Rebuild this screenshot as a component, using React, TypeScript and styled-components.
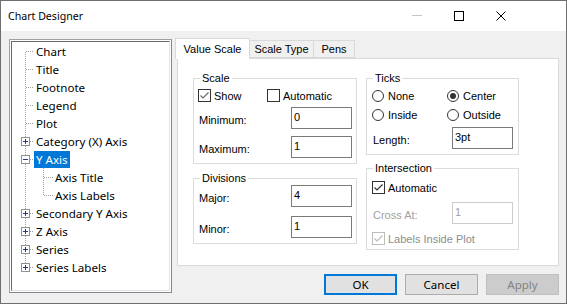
import React from "react";
import styled, { createGlobalStyle } from "styled-components";

const UI = `"Segoe UI", "Noto Sans", sans-serif`;
const SANS = `"Liberation Sans", Arial, sans-serif`;

const GlobalStyle = createGlobalStyle`
  html, body {
    margin: 0;
    padding: 0;
    background: #fff;
  }
  body {
    width: 567px;
    height: 304px;
    overflow: hidden;
  }
`;

const Window = styled.div`
  width: 567px;
  height: 304px;
  box-sizing: border-box;
  border: 1px solid #6f6f6f;
  display: flex;
  flex-direction: column;
  background: #f0f0f0;
  font-family: ${SANS};
  font-size: 11px;
  color: #000;
`;

const TitleBar = styled.div`
  height: 30px;
  flex: none;
  background: #fff;
  display: flex;
  align-items: center;
  padding-left: 7px;
`;

const Title = styled.span`
  font-family: ${UI};
  font-size: 10.6px;
  color: #000;
`;

const CaptionGroup = styled.div`
  margin-left: auto;
  margin-right: 44px;
  display: flex;
  height: 100%;
`;

const CaptionButton = styled.div`
  width: 42px;
  height: 100%;
  display: flex;
  align-items: center;
  justify-content: center;
`;

const Body = styled.div`
  flex: 1;
  display: flex;
  align-items: flex-start;
  padding: 7px 0 0 8px;
`;

const TreeFrame = styled.div`
  width: 163px;
  height: 254px;
  box-sizing: border-box;
  margin-top: 1px;
  border: 1px solid;
  border-color: #a0a0a0 #828790 #828790 #a0a0a0;
  padding: 1px;
  background: #fff;
`;

const TreeView = styled.div`
  height: 100%;
  box-sizing: border-box;
  border: 1px solid;
  border-color: #696969 #e3e3e3 #e3e3e3 #696969;
  background: #fff;
  display: flex;
  flex-direction: column;
  font-family: ${UI};
  font-size: 11.6px;
`;

const TreeRow = styled.div`
  height: 18px;
  display: flex;
  align-items: center;
  flex: none;
`;

const NodeLabel = styled.span<{ selected?: boolean }>`
  height: 17px;
  line-height: 17px;
  padding: 0 2px;
  white-space: nowrap;
  background: ${({ selected }) => (selected ? "#0078d7" : "transparent")};
  color: ${({ selected }) => (selected ? "#fff" : "#000")};
`;

const RightColumn = styled.div`
  margin-left: 3px;
  width: 384px;
  display: flex;
  flex-direction: column;
`;

const TabStrip = styled.div`
  height: 20px;
  display: flex;
  align-items: flex-end;
`;

const Tab = styled.div<{ active?: boolean; w: number }>`
  width: ${({ w }) => w}px;
  height: ${({ active }) => (active ? 21 : 18)}px;
  margin-bottom: ${({ active }) => (active ? -1 : 0)}px;
  margin-left: ${({ active }) => (active ? 0 : -1)}px;
  box-sizing: border-box;
  border: 1px solid #d9d9d9;
  border-bottom: ${({ active }) => (active ? "none" : "1px solid #d9d9d9")};
  background: ${({ active }) => (active ? "#fff" : "#f0f0f0")};
  position: relative;
  z-index: ${({ active }) => (active ? 2 : 0)};
  display: flex;
  align-items: center;
  justify-content: center;
  white-space: nowrap;
`;

const Page = styled.div`
  margin-left: 2px;
  width: 382px;
  height: 208px;
  box-sizing: border-box;
  border: 1px solid #d9d9d9;
  background: #fff;
  display: flex;
  gap: 9px;
  padding: 13px 0 0 15px;
  position: relative;
  z-index: 1;
`;

const Column = styled.div<{ w: number }>`
  width: ${({ w }) => w}px;
  display: flex;
  flex-direction: column;
`;

const Group = styled.fieldset<{ top?: number }>`
  margin: ${({ top }) => top ?? 0}px 0 0 0;
  padding: 0;
  min-width: 0;
  border: 1px solid #dcdcdc;
`;

const Legend = styled.legend`
  margin-left: 6px;
  padding: 0 2px;
  line-height: 13px;
  font-size: 11px;
`;

const GroupBody = styled.div<{ pad: string }>`
  padding: ${({ pad }) => pad};
  display: flex;
  flex-direction: column;
`;

const OptionRow = styled.div<{ h: number; top?: number }>`
  height: ${({ h }) => h}px;
  margin-top: ${({ top }) => top ?? 0}px;
  display: flex;
  align-items: center;
`;

const Option = styled.label<{ w?: number; disabled?: boolean }>`
  display: inline-flex;
  align-items: center;
  gap: 3px;
  width: ${({ w }) => (w ? `${w}px` : "auto")};
  color: ${({ disabled }) => (disabled ? "#8d8d8d" : "#000")};
  white-space: nowrap;
`;

const RadioOption = styled(Option)`
  gap: 4px;
`;

const FieldRow = styled.div<{ top?: number }>`
  height: 22px;
  margin-top: ${({ top }) => top ?? 0}px;
  display: flex;
  align-items: center;
  justify-content: space-between;
`;

const FieldLabel = styled.span<{ disabled?: boolean }>`
  padding: 3px 0 0 1px;
  color: ${({ disabled }) => (disabled ? "#a0a0a0" : "#000")};
`;

const TextBox = styled.div<{ disabled?: boolean }>`
  width: 61px;
  height: 22px;
  box-sizing: border-box;
  border: 1px solid ${({ disabled }) => (disabled ? "#cccccc" : "#7a7a7a")};
  background: #fff;
  padding: 2px 0 0 2px;
  line-height: 14px;
  color: ${({ disabled }) => (disabled ? "#a0a0a0" : "#000")};
`;

const ButtonRow = styled.div`
  margin-top: 8px;
  display: flex;
  justify-content: flex-end;
  gap: 8px;
`;

const Button = styled.div<{ primary?: boolean; disabled?: boolean }>`
  width: 73px;
  height: 21px;
  box-sizing: border-box;
  border: ${({ primary, disabled }) =>
    primary ? "2px solid #0078d7" : disabled ? "1px solid #bfbfbf" : "1px solid #adadad"};
  background: ${({ disabled }) => (disabled ? "#cccccc" : "#e1e1e1")};
  color: ${({ disabled }) => (disabled ? "#838383" : "#000")};
  font-family: ${UI};
  font-size: 11.5px;
  display: flex;
  align-items: center;
  justify-content: center;
`;

type Node = {
  label: string;
  level: number;
  expander?: "plus" | "minus";
  selected?: boolean;
  lastChild?: boolean;
};

const nodes: Node[] = [
  { label: "Chart", level: 0 },
  { label: "Title", level: 0 },
  { label: "Footnote", level: 0 },
  { label: "Legend", level: 0 },
  { label: "Plot", level: 0 },
  { label: "Category (X) Axis", level: 0, expander: "plus" },
  { label: "Y Axis", level: 0, expander: "minus", selected: true },
  { label: "Axis Title", level: 1 },
  { label: "Axis Labels", level: 1, lastChild: true },
  { label: "Secondary Y Axis", level: 0, expander: "plus" },
  { label: "Z Axis", level: 0, expander: "plus" },
  { label: "Series", level: 0, expander: "plus" },
  { label: "Series Labels", level: 0, expander: "plus" },
];

const dot = { stroke: "#a0a0a0", strokeWidth: 1, strokeDasharray: "1 1" };

// tree connector lines for one row
const Gutter = ({ node, first, last }: { node: Node; first: boolean; last: boolean }) => {
  const w = 22 + node.level * 19;
  return (
    <svg width={w} height={18} style={{ flex: "none", display: "block" }} shapeRendering="crispEdges">
      <line x1={13.5} y1={first ? 10 : 0} x2={13.5} y2={last ? 10 : 18} {...dot} />
      {node.level === 0 && <line x1={14} y1={9.5} x2={22} y2={9.5} {...dot} />}
      {node.level === 1 && (
        <>
          <line x1={31.5} y1={0} x2={31.5} y2={node.lastChild ? 10 : 18} {...dot} />
          <line x1={32} y1={9.5} x2={41} y2={9.5} {...dot} />
        </>
      )}
      {node.expander && (
        <g>
          <rect x={9.5} y={5.5} width={8} height={8} fill="#fff" stroke="#919191" />
          <line x1={11} y1={9.5} x2={16} y2={9.5} stroke="#1e3b8b" />
          {node.expander === "plus" && <line x1={13.5} y1={7} x2={13.5} y2={12} stroke="#1e3b8b" />}
        </g>
      )}
    </svg>
  );
};

const CheckBox = ({ checked, color = "#333", border = "#333" }: { checked?: boolean; color?: string; border?: string }) => (
  <svg width={13} height={13} style={{ flex: "none", display: "block" }}>
    <rect x={0.5} y={0.5} width={12} height={12} fill="#fff" stroke={border} />
    {checked && <polyline points="2.5,6.5 5,9 10.5,3.5" fill="none" stroke={color} strokeWidth={1.2} />}
  </svg>
);

const Radio = ({ checked }: { checked?: boolean }) => (
  <svg width={12} height={12} style={{ flex: "none", display: "block" }}>
    <circle cx={6} cy={6} r={5.5} fill="#fff" stroke="#333" />
    {checked && <circle cx={6} cy={6} r={3} fill="#333" />}
  </svg>
);

const App = () => {
  return (
    <>
      <GlobalStyle />
      <Window>
        <TitleBar>
          <Title>Chart Designer</Title>
          <CaptionGroup>
            <CaptionButton>
              <svg width={10} height={10}>
                <line x1={0} y1={4.5} x2={10} y2={4.5} stroke="#c4c4c4" />
              </svg>
            </CaptionButton>
            <CaptionButton>
              <svg width={10} height={10}>
                <rect x={0.5} y={0.5} width={9} height={9} fill="none" stroke="#000" />
              </svg>
            </CaptionButton>
            <CaptionButton>
              <svg width={10} height={10}>
                <path d="M0.5 0.5 L9.5 9.5 M9.5 0.5 L0.5 9.5" stroke="#000" strokeWidth={1} />
              </svg>
            </CaptionButton>
          </CaptionGroup>
        </TitleBar>
        <Body>
          <TreeFrame>
            <TreeView>
              {nodes.map((n, i) => (
                <TreeRow key={n.label}>
                  <Gutter node={n} first={i === 0} last={i === nodes.length - 1} />
                  <NodeLabel selected={n.selected}>{n.label}</NodeLabel>
                </TreeRow>
              ))}
            </TreeView>
          </TreeFrame>
          <RightColumn>
            <TabStrip>
              <Tab active w={75}>Value Scale</Tab>
              <Tab w={65}>Scale Type</Tab>
              <Tab w={42}>Pens</Tab>
            </TabStrip>
            <Page>
              <Column w={164}>
                <Group>
                  <Legend>Scale</Legend>
                  <GroupBody pad="3px 4px 5px 4px">
                    <OptionRow h={15}>
                      <Option w={69}>
                        <CheckBox checked color="#6b6b6b" />
                        Show
                      </Option>
                      <Option>
                        <CheckBox />
                        Automatic
                      </Option>
                    </OptionRow>
                    <FieldRow top={4}>
                      <FieldLabel>Minimum:</FieldLabel>
                      <TextBox>0</TextBox>
                    </FieldRow>
                    <FieldRow top={7}>
                      <FieldLabel>Maximum:</FieldLabel>
                      <TextBox>1</TextBox>
                    </FieldRow>
                  </GroupBody>
                </Group>
                <Group top={8}>
                  <Legend>Divisions</Legend>
                  <GroupBody pad="0 4px 5px 4px">
                    <FieldRow>
                      <FieldLabel>Major:</FieldLabel>
                      <TextBox>4</TextBox>
                    </FieldRow>
                    <FieldRow top={9}>
                      <FieldLabel>Minor:</FieldLabel>
                      <TextBox>1</TextBox>
                    </FieldRow>
                  </GroupBody>
                </Group>
              </Column>
              <Column w={153}>
                <Group>
                  <Legend>Ticks</Legend>
                  <GroupBody pad="1px 5px 5px 5px">
                    <OptionRow h={19}>
                      <RadioOption w={75}>
                        <Radio />
                        None
                      </RadioOption>
                      <RadioOption>
                        <Radio checked />
                        Center
                      </RadioOption>
                    </OptionRow>
                    <OptionRow h={19}>
                      <RadioOption w={75}>
                        <Radio />
                        Inside
                      </RadioOption>
                      <RadioOption>
                        <Radio />
                        Outside
                      </RadioOption>
                    </OptionRow>
                    <FieldRow top={3}>
                      <FieldLabel>Length:</FieldLabel>
                      <TextBox>3pt</TextBox>
                    </FieldRow>
                  </GroupBody>
                </Group>
                <Group top={7}>
                  <Legend>Intersection</Legend>
                  <GroupBody pad="5px 5px 3px 5px">
                    <OptionRow h={15}>
                      <Option>
                        <CheckBox checked />
                        Automatic
                      </Option>
                    </OptionRow>
                    <FieldRow top={7}>
                      <FieldLabel disabled>Cross At:</FieldLabel>
                      <TextBox disabled>1</TextBox>
                    </FieldRow>
                    <OptionRow h={15} top={7}>
                      <Option disabled>
                        <CheckBox checked color="#bcbcbc" border="#bcbcbc" />
                        Labels Inside Plot
                      </Option>
                    </OptionRow>
                  </GroupBody>
                </Group>
              </Column>
            </Page>
            <ButtonRow>
              <Button primary>OK</Button>
              <Button>Cancel</Button>
              <Button disabled>Apply</Button>
            </ButtonRow>
          </RightColumn>
        </Body>
      </Window>
    </>
  );
};

export default App;
